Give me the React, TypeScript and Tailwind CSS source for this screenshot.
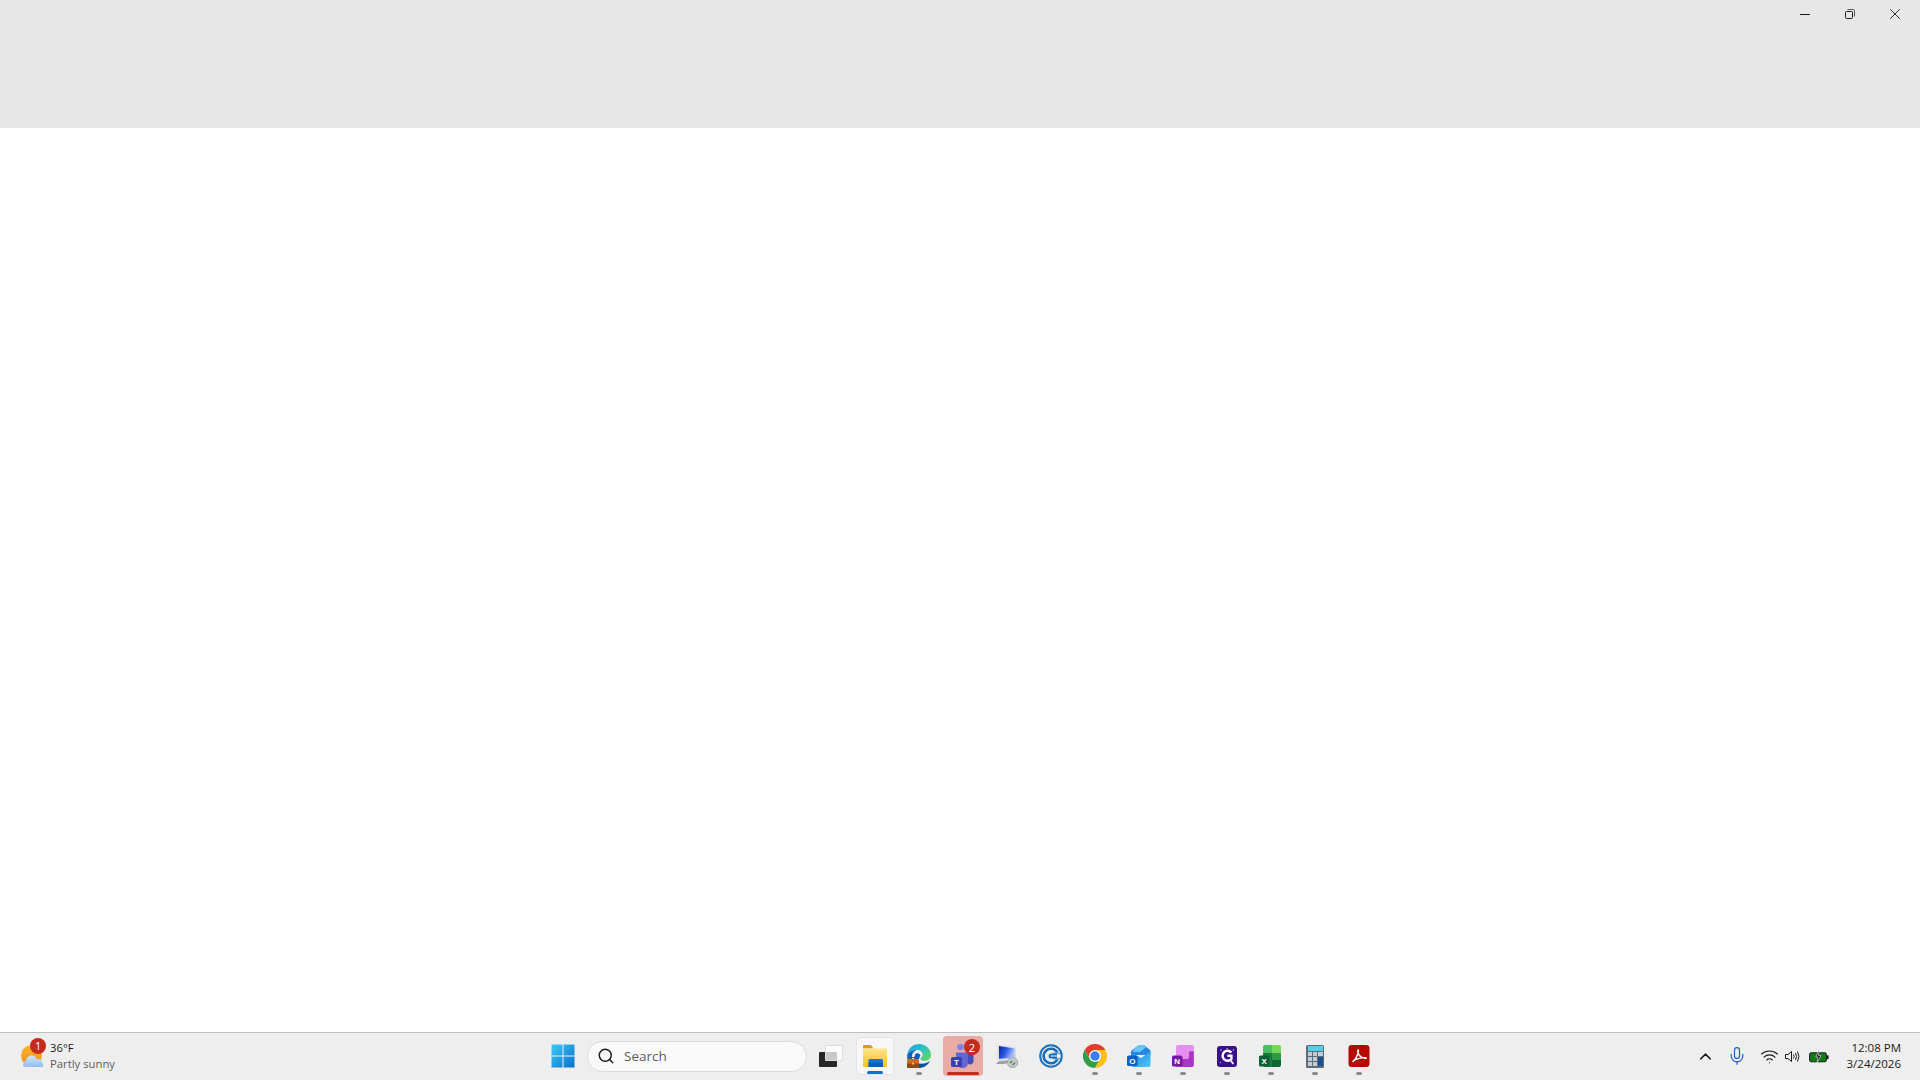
import type { ReactNode } from "react";
import { ChevronUp, Mic, Search, Wifi } from "lucide-react";

const uiFont = "font-['Open_Sans','Noto_Sans',sans-serif]";

function TitleButtons() {
  return (
    <div className="flex justify-end pr-[3px]">
      <button className="flex h-[28px] w-[45px] items-center justify-center">
        <svg width="10" height="10" viewBox="0 0 10 10"><path d="M0 5.5H10" stroke="#1a1a1a" strokeWidth="1" /></svg>
      </button>
      <button className="flex h-[28px] w-[45px] items-center justify-center">
        <svg width="10" height="10" viewBox="0 0 10 10" fill="none" stroke="#1a1a1a"><rect x="0.5" y="2.5" width="7" height="7" rx="1" /><path d="M2.5 0.5H8C8.9 0.5 9.5 1.1 9.5 2V7.5" strokeWidth="0.7" /></svg>
      </button>
      <button className="flex h-[28px] w-[45px] items-center justify-center">
        <svg width="10" height="10" viewBox="0 0 10 10"><path d="M0.2 0.2L9.8 9.8M9.8 0.2L0.2 9.8" stroke="#1a1a1a" strokeWidth="0.9" /></svg>
      </button>
    </div>
  );
}

function Weather() {
  return (
    <div className="flex w-[540px] shrink-0 items-center pl-[20px]">
      <div className="relative h-[32px] w-[30px]">
        <svg width="24" height="24" viewBox="0 0 24 24" className="absolute left-0 top-[4px]">
          <defs>
            <linearGradient id="sun" x1="0" y1="0" x2="0" y2="1">
              <stop offset="0" stopColor="#fbb72c" />
              <stop offset="1" stopColor="#ef8a1c" />
            </linearGradient>
            <linearGradient id="cloud" x1="0" y1="0" x2="0" y2="1">
              <stop offset="0" stopColor="#d6e7fb" />
              <stop offset="1" stopColor="#8fbcf0" />
            </linearGradient>
          </defs>
          <circle cx="11.5" cy="11.5" r="10.5" fill="url(#sun)" />
          <path d="M6 23C3.8 23 3 21.6 3 20.2C3 18.6 4.2 17.4 5.6 17.2C6.2 14.2 8.4 11.5 11.6 11.5C14.4 11.5 16 13.2 16.8 15.2C17.4 15 18 15 18.5 15C20.5 15 21.8 16.6 22 18.4C23 18.9 23.4 19.9 23.4 20.9C23.4 22.2 22.6 23 21.6 23Z" fill="url(#cloud)" />
        </svg>
        <div className="absolute left-[10px] top-[-2px] flex h-[16px] w-[16px] items-center justify-center rounded-full bg-[#c42b1c] text-[10px] leading-none text-white">1</div>
      </div>
      <div className={`flex flex-col ${uiFont} text-[11.3px] leading-[16px]`}>
        <span className="text-[#1a1a1a]">36°F</span>
        <span className="text-[#5d5d5d]">Partly sunny</span>
      </div>
    </div>
  );
}

function WindowsLogo() {
  return (
    <svg width="24" height="24" viewBox="0 0 24 24">
      <defs>
        <linearGradient id="win" x1="0" y1="0" x2="1" y2="1">
          <stop offset="0" stopColor="#3ccbf4" />
          <stop offset="1" stopColor="#0a6fcb" />
        </linearGradient>
      </defs>
      <path d="M0.5 0.5H11.5V11.5H0.5ZM12.5 0.5H23.5V11.5H12.5ZM0.5 12.5H11.5V23.5H0.5ZM12.5 12.5H23.5V23.5H12.5Z" fill="url(#win)" />
    </svg>
  );
}

function AppSlot({ children, dot = true }: { children: ReactNode; dot?: boolean }) {
  return (
    <div className="relative flex h-[40px] w-[40px] shrink-0 items-center justify-center">
      {children}
      {dot && <span className="absolute bottom-[1px] left-1/2 h-[3px] w-[6px] -translate-x-1/2 rounded-full bg-[#8a8a8a]" />}
    </div>
  );
}

function FileExplorerIcon() {
  return (
    <svg width="24" height="24" viewBox="0 0 24 24">
      <defs>
        <linearGradient id="folder" x1="0" y1="0" x2="0" y2="1">
          <stop offset="0" stopColor="#ffe58a" />
          <stop offset="1" stopColor="#fcc21f" />
        </linearGradient>
      </defs>
      <path d="M0 2C0 1.4 0.5 1 1 1H8L10.5 4.5H0Z" fill="#dd9d17" />
      <rect x="0" y="4.5" width="24" height="18.5" rx="0.8" fill="url(#folder)" />
      <path d="M5.5 23V16.5C5.5 15.7 6.2 15 7 15H18.5C19.3 15 20 15.7 20 16.5V23Z" fill="#0f78d4" />
      <rect x="5.5" y="18.5" width="14.5" height="4.5" fill="#0b62b0" />
    </svg>
  );
}

function EdgeIcon() {
  return (
    <svg width="24" height="24" viewBox="0 0 24 24">
      <defs>
        <linearGradient id="edge" x1="0" y1="0" x2="1" y2="0.8">
          <stop offset="0" stopColor="#1c9fe0" />
          <stop offset="0.55" stopColor="#2fc4c4" />
          <stop offset="1" stopColor="#63d65a" />
        </linearGradient>
      </defs>
      <path d="M0.3 10.5C1 4.5 6 0 12.2 0C18.6 0 24 5 24 11C24 14.8 21 16.8 17.8 16.8C15.4 16.8 13.4 16 13.4 15C13.4 14 15.6 13.2 15.6 10.6C15.6 8 13 6 10 6C5.8 6 1.6 8 0.3 10.5Z" fill="url(#edge)" />
      <path d="M0.3 10.5C1.6 8.4 5 6 9.5 6C6.4 7.6 5 9.6 5 12.2V15H0.3Z" fill="#0c62b4" />
      <path d="M10 19C14 20.6 20 19.8 23 16.6C21.4 21 17.2 24 12.6 24H10Z" fill="#0a50a0" />
      <path d="M9 9.5C11 8.6 13 9.6 13.4 11.5C12.8 13 12 14 12 15H7.4C7.2 12.8 7.8 10.6 9 9.5Z" fill="#0f5fb0" />
      <rect x="0" y="15" width="12" height="9" rx="1" fill="#c0701e" />
      <rect x="0" y="19.5" width="12" height="4.5" rx="1" fill="#8a4c12" />
      <path d="M4 15V13.6H8V15" fill="none" stroke="#7a4410" strokeWidth="1" />
      <rect x="5" y="18.5" width="2" height="2" fill="#f3c04a" />
    </svg>
  );
}

function TeamsIcon() {
  return (
    <svg width="24" height="24" viewBox="0 0 24 24">
      <circle cx="9.5" cy="3" r="3.3" fill="#7b83eb" />
      <path d="M5 8.5H17V19C17 22 14.5 24 11.5 24C8 24 5 21.5 5 18Z" fill="#6068d8" />
      <path d="M17 9H22.5V17C22.5 19 21 20.5 19 20.5C18 20.5 17.4 20.2 17 19.8Z" fill="#454dba" />
      <rect x="0" y="13" width="11" height="10" rx="1.8" fill="#3a41ad" />
      <text x="5.5" y="21" textAnchor="middle" fontSize="8" fontWeight="700" fontFamily="'Liberation Sans',sans-serif" fill="#fff">T</text>
    </svg>
  );
}

function RemoteIcon() {
  return (
    <svg width="24" height="24" viewBox="0 0 24 24">
      <defs>
        <linearGradient id="screen" x1="0" y1="0" x2="1" y2="0.4">
          <stop offset="0" stopColor="#10229a" />
          <stop offset="0.5" stopColor="#2a55e0" />
          <stop offset="1" stopColor="#a8c0f8" />
        </linearGradient>
      </defs>
      <path d="M2.5 0.5L21 3.5V15.5L2.5 16.5Z" fill="#d8dce4" />
      <path d="M4 2L19.5 4.6V13.8L4 14.8Z" fill="url(#screen)" />
      <path d="M4 17L13 16.4V19L9 20L1 20Z" fill="#9aa0a8" />
      <circle cx="17.5" cy="18.5" r="5.2" fill="#c2c6ca" stroke="#8a8f94" strokeWidth="0.6" />
      <path d="M15 19L17 17M17.6 21L20 18.6" stroke="#2e8b3a" strokeWidth="1.3" />
    </svg>
  );
}

function CircleCIcon() {
  return (
    <svg width="24" height="24" viewBox="0 0 24 24" fill="none">
      <circle cx="12" cy="12" r="10.8" stroke="#1a6fb8" strokeWidth="2" />
      <path d="M18.3 8.4A7.3 7.3 0 1 0 18.3 15.6" stroke="#1a6fb8" strokeWidth="2.6" />
      <path d="M18 10.4H12.2A1.6 1.6 0 0 0 12.2 13.6H18" stroke="#1a6fb8" strokeWidth="2" />
      <path d="M14 9.2H22M14 14.8H22" stroke="#1a6fb8" strokeWidth="0.9" />
    </svg>
  );
}

function ChromeIcon() {
  return (
    <svg width="24" height="24" viewBox="0 0 24 24">
      <path d="M1.6 6A12 12 0 0 1 22.4 6H12L7 15Z" fill="#e33b2e" />
      <path d="M1.6 6A12 12 0 0 0 12 24L17 15H7Z" fill="#2f9e46" />
      <path d="M22.4 6H12L17 15L12 24A12 12 0 0 0 22.4 6Z" fill="#fbc118" />
      <circle cx="12" cy="12" r="6" fill="#fff" />
      <circle cx="12" cy="12" r="4.7" fill="#3a7ff0" />
    </svg>
  );
}

function OutlookIcon() {
  return (
    <svg width="24" height="24" viewBox="0 0 24 24">
      <defs>
        <linearGradient id="outlook" x1="0" y1="0" x2="1" y2="1">
          <stop offset="0" stopColor="#1c86e4" />
          <stop offset="1" stopColor="#4cc8f7" />
        </linearGradient>
      </defs>
      <path d="M4 7L12 1H17L23.5 6.5V11H4Z" fill="#2a84e0" />
      <path d="M8.5 3.6L12 1H17L19.5 3L13 8H5.5Z" fill="#62c8fb" />
      <path d="M4 8L14 14L23.5 7.5V21C23.5 22.1 22.6 23 21.5 23H6C4.9 23 4 22.1 4 21Z" fill="url(#outlook)" />
      <rect x="0" y="11.5" width="10.5" height="10.5" rx="1.6" fill="#0e5fc2" />
      <text x="5.25" y="20" textAnchor="middle" fontSize="8" fontWeight="700" fontFamily="'Liberation Sans',sans-serif" fill="#fff">O</text>
    </svg>
  );
}

function OneNoteIcon() {
  return (
    <svg width="24" height="24" viewBox="0 0 24 24">
      <path d="M5 3C5 1.9 5.9 1 7 1H21C22 1 22.8 1.8 22.8 2.8V21C22.8 22.1 21.9 23 20.8 23H7C5.9 23 5 22.1 5 21Z" fill="#e58ef0" />
      <path d="M18 9C18 8 18.8 7.2 19.8 7.2H22.8V21C22.8 22.1 21.9 23 20.8 23H10V15H16C17.1 15 18 14.1 18 13Z" fill="#ab35c6" />
      <rect x="5" y="13" width="6" height="10" fill="#c85ade" />
      <rect x="1" y="11.5" width="10.5" height="11" rx="1.6" fill="#761a9f" />
      <text x="6.25" y="20.2" textAnchor="middle" fontSize="8" fontWeight="700" fontFamily="'Liberation Sans',sans-serif" fill="#fff">N</text>
    </svg>
  );
}

function PurpleAppIcon() {
  return (
    <svg width="24" height="24" viewBox="0 0 24 24">
      <rect x="2" y="2" width="20" height="21" rx="3" fill="#3a1088" />
      <path d="M16.4 8.6A5 5 0 1 0 16.4 15V11.8H12.4" fill="none" stroke="#fff" strokeWidth="2.4" />
      <path d="M14.6 15.2L18.4 20" stroke="#fff" strokeWidth="1.8" />
      <circle cx="6" cy="6" r="0.8" fill="#c9b8f5" />
      <circle cx="18.4" cy="6" r="0.8" fill="#c9b8f5" />
      <circle cx="12" cy="4.4" r="0.6" fill="#c9b8f5" />
      <circle cx="5.4" cy="18.6" r="0.7" fill="#c9b8f5" />
    </svg>
  );
}

function ExcelIcon() {
  return (
    <svg width="24" height="24" viewBox="0 0 24 24" className="-translate-x-[1px]">
      <path d="M5 3C5 1.9 5.9 1 7 1H14V9H5Z" fill="#4cbf62" />
      <path d="M14 1H21C22.1 1 23 1.9 23 3V9H14Z" fill="#76d65a" />
      <path d="M14 9H23V16H14Z" fill="#2f9a42" />
      <path d="M5 9H14V23H7C5.9 23 5 22.1 5 21Z" fill="#167c40" />
      <path d="M14 16H23V21C23 22.1 22.1 23 21 23H14Z" fill="#0f6630" />
      <rect x="1" y="11.5" width="10.5" height="11" rx="1.6" fill="#0d5f34" />
      <text x="6.25" y="20.2" textAnchor="middle" fontSize="8" fontWeight="700" fontFamily="'Liberation Sans',sans-serif" fill="#fff">X</text>
    </svg>
  );
}

function CalculatorIcon() {
  return (
    <div className="flex h-[23px] w-[18px] flex-col gap-[1px] rounded-[1.5px] bg-[#5e6b78] p-[1.5px]">
      <div className="h-[5px] bg-[#4fd1e8]" />
      <div className="grid flex-1 grid-cols-3 grid-rows-3 gap-[1px]">
        <span className="bg-[#c3ccd4]" />
        <span className="bg-[#c3ccd4]" />
        <span className="bg-[#c3ccd4]" />
        <span className="bg-[#c3ccd4]" />
        <span className="bg-[#c3ccd4]" />
        <span className="row-span-2 bg-[#1d4f8f]" />
        <span className="bg-[#c3ccd4]" />
        <span className="bg-[#c3ccd4]" />
      </div>
    </div>
  );
}

function AcrobatIcon() {
  return (
    <svg width="24" height="24" viewBox="0 0 24 24">
      <rect x="1.5" y="1" width="21" height="22" rx="3.2" fill="#b30b00" />
      <path d="M5.5 17.8C8 16 10.5 12 11.5 6.8C11.7 5.6 10.8 5.6 10.7 6.8C10.5 9.5 13 14 18.5 14.5C19.6 14.5 19.6 13.6 18.5 13.6C14 13.4 8 15 5.5 17.8Z" fill="none" stroke="#fff" strokeWidth="1.4" />
    </svg>
  );
}

function VolumeIcon() {
  return (
    <svg width="16" height="13" viewBox="0 0 16 13" fill="none" stroke="#1a1a1a" strokeWidth="1">
      <path d="M0.5 4.5H3L6.5 1.5V11.5L3 8.5H0.5Z" />
      <path d="M8.5 4.5Q9.8 6.5 8.5 8.5" />
      <path d="M10.5 3Q12.6 6.5 10.5 10" />
      <path d="M12.5 1.5Q15.4 6.5 12.5 11.5" />
    </svg>
  );
}

function BatteryIcon() {
  return (
    <svg width="20" height="13" viewBox="0 0 20 13">
      <rect x="0.6" y="2.8" width="16.8" height="9" rx="1.6" fill="#0f7a17" stroke="#1a1a1a" strokeWidth="1" />
      <rect x="18" y="5.2" width="1.6" height="4" rx="0.6" fill="#1a1a1a" />
      <path d="M10 0L6.8 7H9L8 13L12 5.6H9.6Z" fill="#1a1a1a" stroke="#eeeeee" strokeWidth="0.6" />
    </svg>
  );
}

function Taskbar() {
  return (
    <div className="flex h-[48px] shrink-0 items-center border-t border-[#bfbfbf] bg-[#eeeeee] pb-[1px]">
      <Weather />
      <div className="flex h-full flex-1 items-center">
        <div className="ml-[9px] flex h-[40px] w-[27px] items-center justify-center">
          <WindowsLogo />
        </div>
        <div className={`ml-[11px] flex h-[31px] w-[220px] items-center rounded-full border border-[#dcdcdc] bg-[#fafafa] pl-[9px] ${uiFont} text-[13.5px] text-[#5d5d5d]`}>
          <Search size={18} strokeWidth={2} className="text-[#1f1f1f]" />
          <span className="ml-[9px]">Search</span>
        </div>
        <div className="ml-[4px] flex h-[40px] w-[40px] items-center justify-center">
          <div className="relative h-[22px] w-[24px]">
            <div className="absolute bottom-0 left-0 h-[15px] w-[18px] rounded-[1px] bg-[#262626]" />
            <div className="absolute right-0 top-0 h-[16px] w-[18px] rounded-[1px] border border-[#dddddd] bg-white/75" />
          </div>
        </div>
        <div className="ml-[4px] flex items-center gap-[4px]">
          <div className="relative mx-[1px] flex h-[38px] w-[38px] items-center justify-center rounded-[4px] border border-[#e5e5e5] bg-[#f8f8f8]">
            <FileExplorerIcon />
            <span className="absolute bottom-0 left-1/2 h-[3px] w-[16px] -translate-x-1/2 rounded-full bg-[#0a6fd0]" />
          </div>
          <AppSlot><EdgeIcon /></AppSlot>
          <div className="relative flex h-[40px] w-[40px] items-center justify-center rounded-[4px] bg-[#e8aba5]">
            <TeamsIcon />
            <span className="absolute right-[3px] top-[3px] flex h-[16px] w-[16px] items-center justify-center rounded-full bg-[#c42b1c] text-[11px] leading-none text-white">2</span>
            <span className="absolute bottom-[1px] left-1/2 h-[3px] w-[32px] -translate-x-1/2 rounded-full bg-[#c42b1c]" />
          </div>
          <AppSlot dot={false}><RemoteIcon /></AppSlot>
          <AppSlot dot={false}><CircleCIcon /></AppSlot>
          <AppSlot><ChromeIcon /></AppSlot>
          <AppSlot><OutlookIcon /></AppSlot>
          <AppSlot><OneNoteIcon /></AppSlot>
          <AppSlot><PurpleAppIcon /></AppSlot>
          <AppSlot><ExcelIcon /></AppSlot>
          <AppSlot><CalculatorIcon /></AppSlot>
          <AppSlot><AcrobatIcon /></AppSlot>
        </div>
      </div>
      <div className="flex h-full items-center pr-[19px] text-[#1a1a1a]">
        <div className="flex w-[20px] justify-center"><ChevronUp size={19} strokeWidth={1.8} /></div>
        <div className="ml-[12px] flex w-[20px] justify-center"><Mic size={20} strokeWidth={1.4} className="text-[#1f5fbf]" /></div>
        <div className="ml-[12px] flex w-[20px] justify-center"><Wifi size={19} strokeWidth={1.4} /></div>
        <div className="ml-[4px] flex w-[20px] justify-center"><VolumeIcon /></div>
        <div className="ml-[6px] flex w-[20px] justify-center"><BatteryIcon /></div>
        <div className={`flex w-[72px] flex-col items-end ${uiFont} text-[11.5px] leading-[16px] text-[#1a1a1a]`}>
          <span>12:08 PM</span>
          <span>3/24/2026</span>
        </div>
      </div>
    </div>
  );
}

export default function App() {
  return (
    <div className="flex h-screen w-full flex-col overflow-hidden bg-white">
      <div className="h-[128px] shrink-0 bg-[#e7e7e7]">
        <TitleButtons />
      </div>
      <div className="flex-1 bg-white" />
      <Taskbar />
    </div>
  );
}
